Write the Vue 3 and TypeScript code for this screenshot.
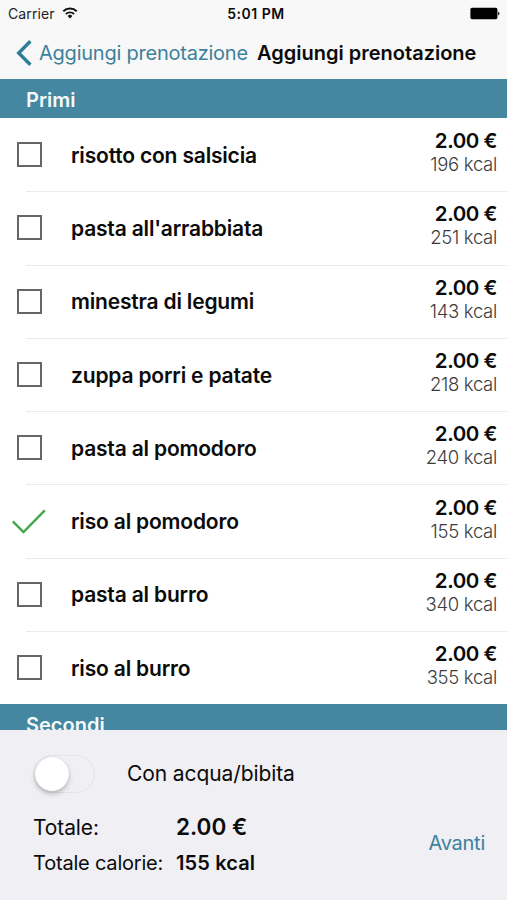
<script setup lang="ts">
import { ref, computed } from 'vue'

interface Dish {
  name: string
  price: number
  kcal: number
  selected: boolean
}

const dishes = ref<Dish[]>([
  { name: 'risotto con salsicia', price: 2, kcal: 196, selected: false },
  { name: "pasta all'arrabbiata", price: 2, kcal: 251, selected: false },
  { name: 'minestra di legumi', price: 2, kcal: 143, selected: false },
  { name: 'zuppa porri e patate', price: 2, kcal: 218, selected: false },
  { name: 'pasta al pomodoro', price: 2, kcal: 240, selected: false },
  { name: 'riso al pomodoro', price: 2, kcal: 155, selected: true },
  { name: 'pasta al burro', price: 2, kcal: 340, selected: false },
  { name: 'riso al burro', price: 2, kcal: 355, selected: false },
])

const withDrink = ref(false)
const chosen = computed(() => dishes.value.filter((d) => d.selected))
const total = computed(() => chosen.value.reduce((sum, d) => sum + d.price, 0))
const calories = computed(() => chosen.value.reduce((sum, d) => sum + d.kcal, 0))
const euro = (value: number): string => `${value.toFixed(2)} €`
</script>

<template>
  <div class="screen">
    <header class="top">
      <div class="status">
        <div class="carrier">
          <span>Carrier</span>
          <svg class="wifi" width="16" height="12" viewBox="0 0 16 12" fill="none" stroke="#111">
            <path d="M1.3 4.3a9.6 9.6 0 0 1 13.4 0" stroke-width="2" />
            <path d="M3.9 7a5.9 5.9 0 0 1 8.2 0" stroke-width="1.9" />
            <path d="M8 11.5 5.6 8.9a3.6 3.6 0 0 1 4.8 0z" fill="#111" stroke="none" />
          </svg>
        </div>
        <span class="clock">5:01 PM</span>
        <svg class="battery" width="30" height="13" viewBox="0 0 30 13">
          <rect x="0.4" y="0.8" width="27" height="11.4" rx="1.6" fill="#000" />
          <path d="M28.2 4.6c1.7.6 1.7 3.4 0 4z" fill="#000" />
        </svg>
      </div>
      <nav class="nav">
        <button class="back" type="button">
          <svg width="16" height="26" viewBox="0 0 16 26" fill="none" stroke="#2f7d99" stroke-width="3.4">
            <path d="M14.4 1.3 2.7 13l11.7 11.7" />
          </svg>
          <span>Aggiungi prenotazione</span>
        </button>
        <h1 class="title">Aggiungi prenotazione</h1>
      </nav>
    </header>

    <main class="list">
      <h2 class="section">Primi</h2>
      <ul class="rows">
        <li v-for="dish in dishes" :key="dish.name" class="row" @click="dish.selected = !dish.selected">
          <div class="mark">
            <svg v-if="dish.selected" width="34" height="26" viewBox="0 0 34 26" fill="none" stroke="#43a74b" stroke-width="2.4">
              <path d="M.8 13.4 11.5 24 32.8 2.4" />
            </svg>
            <span v-else class="box"></span>
          </div>
          <span class="name">{{ dish.name }}</span>
          <div class="values">
            <span class="price">{{ euro(dish.price) }}</span>
            <span class="kcal">{{ dish.kcal }} kcal</span>
          </div>
        </li>
      </ul>
      <h2 class="section">Secondi</h2>
    </main>

    <footer class="summary">
      <div class="drink">
        <button class="switch" :class="{ on: withDrink }" type="button" role="switch" :aria-checked="withDrink" @click="withDrink = !withDrink">
          <span class="knob"></span>
        </button>
        <span class="drink-label">Con acqua/bibita</span>
      </div>
      <div class="bottom">
        <dl class="totals">
          <dt class="sum-label">Totale:</dt>
          <dd class="sum">{{ euro(total) }}</dd>
          <dt class="cal-label">Totale calorie:</dt>
          <dd class="cal">{{ calories }} kcal</dd>
        </dl>
        <button class="next" type="button">Avanti</button>
      </div>
    </footer>
  </div>
</template>

<style>
body {
  margin: 0;
  overflow: hidden;
}
</style>

<style scoped>
.screen {
  display: flex;
  flex-direction: column;
  width: 507px;
  height: 900px;
  overflow: hidden;
  background: #fff;
  color: #0b0b0b;
  font-family: Inter, 'Liberation Sans', sans-serif;
  white-space: nowrap;
}
button {
  padding: 0;
  border: 0;
  background: none;
  font: inherit;
  color: inherit;
}
.top {
  flex: none;
  height: 79px;
  background: #f8f8f8;
}
.status {
  display: grid;
  grid-template-columns: 1fr auto 1fr;
  align-items: center;
  height: 27px;
  padding: 0 7px 0 8px;
  font-size: 14px;
}
.carrier {
  display: flex;
  align-items: center;
  gap: 7px;
  color: #222;
  letter-spacing: 0.12px;
}
.wifi {
  margin-top: -2px;
}
.clock {
  padding-left: 4px;
  font-weight: 600;
  letter-spacing: 0.5px;
}
.battery {
  justify-self: end;
}
.nav {
  display: flex;
  align-items: center;
  height: 51px;
  padding-left: 16px;
}
.back {
  display: flex;
  align-items: center;
  gap: 7px;
  width: 241px;
  font-size: 20px;
  letter-spacing: -0.23px;
  color: #3d819c;
}
.title {
  margin: 0;
  font-size: 20px;
  font-weight: 600;
}
.list {
  flex: none;
  height: 651px;
  overflow: hidden;
}
.section {
  height: 39px;
  margin: 0;
  padding-left: 26px;
  background: #4586a0;
  color: #f4fafc;
  font-size: 20px;
  font-weight: 600;
  line-height: 42px;
}
.rows {
  margin: 0;
  padding: 0;
  list-style: none;
}
.row {
  display: flex;
  align-items: center;
  box-sizing: border-box;
  height: 73.3px;
  padding: 0 10px 0 12px;
}
.row + .row {
  background: linear-gradient(#ebebeb, #ebebeb) 26px 0 / 100% 1px no-repeat;
}
.mark {
  display: flex;
  justify-content: center;
  width: 34px;
}
.box {
  box-sizing: border-box;
  width: 25px;
  height: 25px;
  border: 2px solid #666;
}
.name {
  flex: 1;
  padding-top: 1px;
  padding-left: 25px;
  font-size: 21px;
  font-weight: 600;
  letter-spacing: -0.18px;
}
.values {
  display: flex;
  flex-direction: column;
  align-items: flex-end;
  padding-bottom: 4px;
}
.price {
  font-size: 20.5px;
  font-weight: 600;
  line-height: 24px;
  letter-spacing: -0.45px;
}
.kcal {
  color: #3c3c3c;
  font-size: 18.5px;
  font-weight: 300;
  line-height: 23px;
  letter-spacing: -0.3px;
}
.summary {
  flex: 1;
  box-sizing: border-box;
  padding: 24px 22px 0 33px;
  background: #efeff4;
}
.drink {
  display: flex;
  align-items: center;
  height: 39px;
}
.switch {
  box-sizing: border-box;
  width: 62px;
  height: 38px;
  padding: 1px;
  border: 1.5px solid #e4e4e8;
  border-radius: 19px;
}
.switch.on {
  background: #4586a0;
}
.knob {
  display: block;
  width: 34px;
  height: 34px;
  border-radius: 50%;
  background: #fff;
  box-shadow: 0 3px 5px rgba(0, 0, 0, 0.22), 0 0 1px rgba(0, 0, 0, 0.2);
}
.switch.on .knob {
  margin-left: auto;
}
.drink-label {
  padding-left: 32px;
  font-size: 21px;
  letter-spacing: -0.1px;
}
.bottom {
  display: flex;
  align-items: center;
  justify-content: space-between;
  padding-top: 16px;
}
.totals {
  display: grid;
  grid-template-columns: 143px auto;
  grid-template-rows: 36px 36px;
  align-items: center;
  margin: 0;
  font-size: 20px;
}
.totals dd {
  margin: 0;
  font-weight: 600;
}
.totals .sum-label {
  padding-top: 1px;
  font-size: 21px;
  letter-spacing: -0.1px;
}
.totals .sum {
  padding-bottom: 1px;
  font-size: 22.5px;
}
.totals .cal-label {
  letter-spacing: -0.2px;
}
.totals .cal {
  letter-spacing: 0.12px;
}
.next {
  padding-bottom: 4px;
  color: #3d819c;
  font-size: 20px;
  letter-spacing: -0.25px;
}
</style>
